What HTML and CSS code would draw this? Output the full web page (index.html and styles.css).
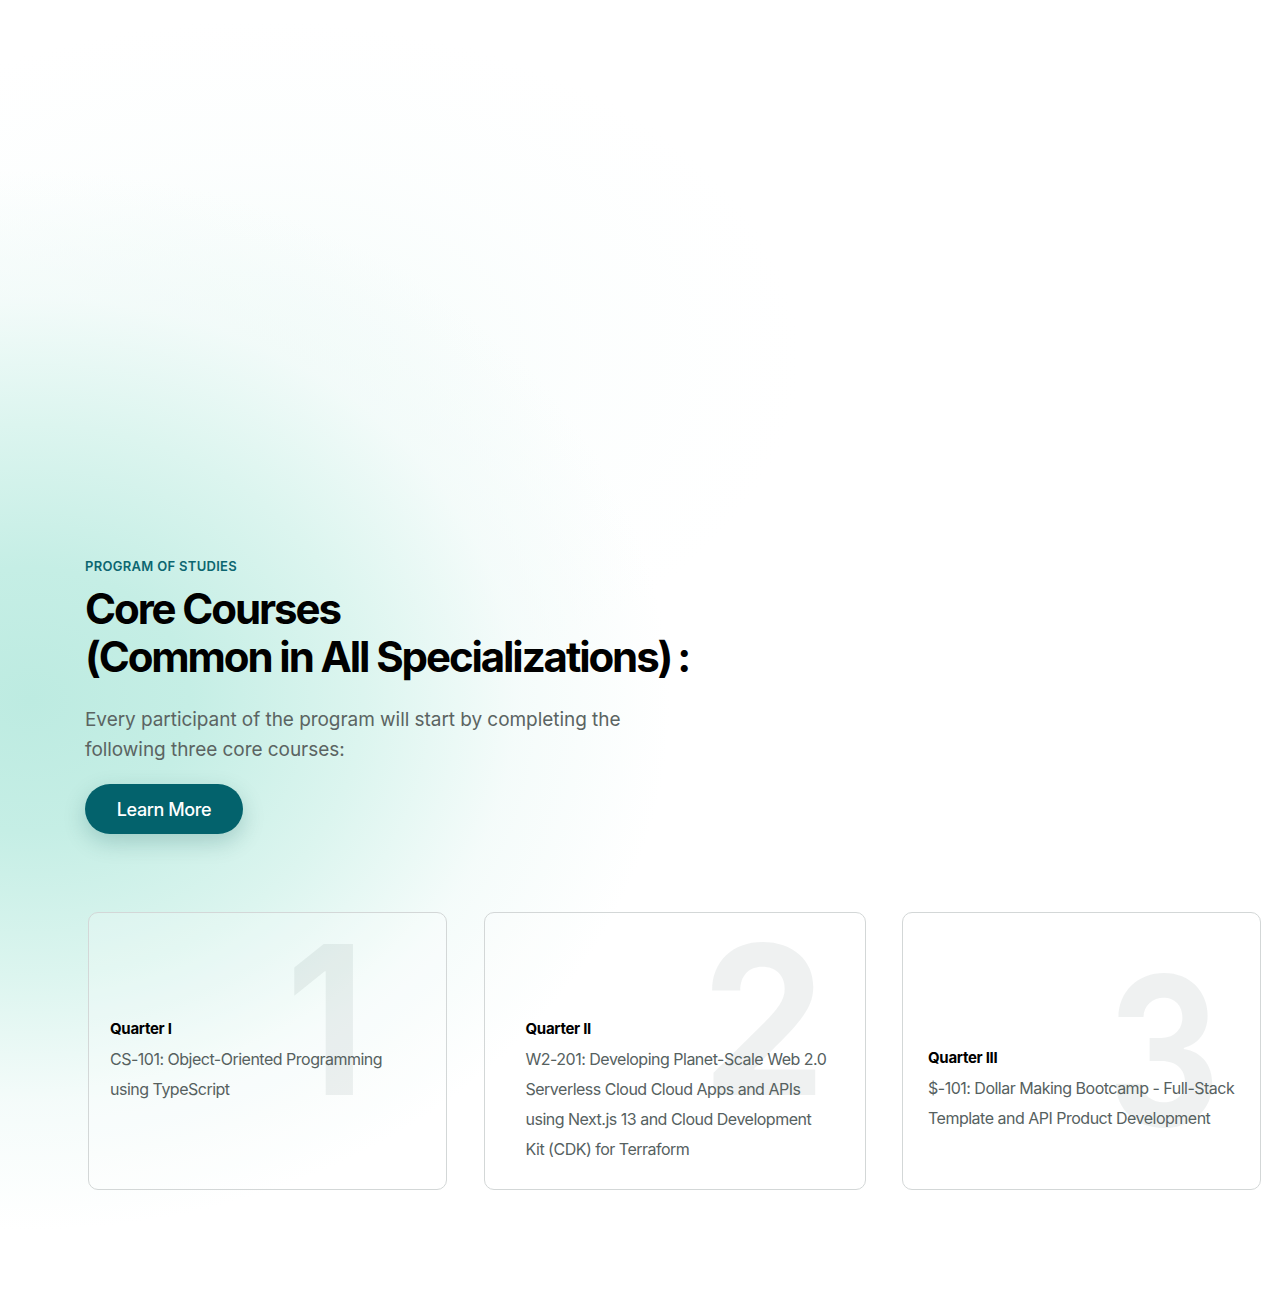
FILE: index.html
```html
<!DOCTYPE html>
<html lang="en">
<head>
<meta charset="utf-8">
<title>Core Courses</title>
<link rel="stylesheet" href="styles.css">
</head>
<body>
<main class="page">
  <section class="intro">
    <p class="eyebrow">PROGRAM OF STUDIES</p>
    <h1 class="title">Core Courses<br>(Common in All Specializations)<span class="colon">:</span></h1>
    <p class="lead">Every participant of the program will start by completing the following three core courses:</p>
    <a class="btn" href="#">Learn More</a>
  </section>
  <section class="cards">
    <article class="card card-1">
      <span class="num num-1" aria-hidden="true">1</span>
      <div class="card-body">
        <h3 class="card-title">Quarter I</h3>
        <p class="card-text">CS-101: Object-Oriented Programming using TypeScript</p>
      </div>
    </article>
    <article class="card card-2">
      <span class="num num-2" aria-hidden="true">2</span>
      <div class="card-body">
        <h3 class="card-title">Quarter II</h3>
        <p class="card-text">W2-201: Developing Planet-Scale Web 2.0 Serverless Cloud Cloud Apps and APIs using Next.js 13 and Cloud Development Kit (CDK) for Terraform</p>
      </div>
    </article>
    <article class="card card-3">
      <span class="num num-3" aria-hidden="true">3</span>
      <div class="card-body">
        <h3 class="card-title">Quarter III</h3>
        <p class="card-text">$-101: Dollar Making Bootcamp - Full-Stack Template and API Product Development</p>
      </div>
    </article>
  </section>
</main>
</body>
</html>
```

FILE: styles.css
```css
* { box-sizing: border-box; }

html, body {
  margin: 0;
  padding: 0;
}

body {
  font-family: "Inter", "Noto Sans", sans-serif;
  color: #000;
  background: #fff;
  overflow: hidden;
}

.page {
  width: 1262px;
  min-height: 1315px;
  background:
    radial-gradient(ellipse 640px 530px at 30px 700px, #bdebe1 0%, #c5eee5 25%, #dcf5ef 52%, rgba(240, 250, 248, 0.7) 76%, rgba(255, 255, 255, 0) 100%),
    radial-gradient(ellipse 540px 340px at 260px 360px, rgba(242, 251, 249, 0.8) 0%, rgba(248, 253, 252, 0.4) 60%, rgba(255, 255, 255, 0) 100%),
    #fff;
  padding-top: 557px;
}

.intro {
  padding-left: 85px;
}

.eyebrow {
  margin: 0;
  font-size: 13px;
  line-height: 18px;
  font-weight: 600;
  color: #0c6670;
  letter-spacing: 0.3px;
}

.title {
  margin: 10px 0 0;
  font-size: 42px;
  line-height: 48px;
  font-weight: 700;
  letter-spacing: -2.1px;
  color: #000;
}

.colon {
  margin-left: 6px;
}

.lead {
  margin: 24px 0 0;
  width: 580px;
  font-size: 19px;
  line-height: 30px;
  color: #5b6462;
  letter-spacing: -0.05px;
}

.btn {
  display: inline-flex;
  align-items: center;
  justify-content: center;
  margin-top: 19px;
  width: 158px;
  height: 50px;
  border-radius: 25px;
  background: #03626c;
  color: #fff;
  text-decoration: none;
  font-size: 18px;
  font-weight: 500;
  letter-spacing: -0.4px;
  box-shadow: 0 8px 22px rgba(10, 80, 80, 0.22);
}

.cards {
  display: grid;
  grid-template-columns: 359px 382px 359px;
  column-gap: 36.5px;
  margin-top: 78px;
  padding-left: 88px;
}

.card {
  position: relative;
  height: 278px;
  border: 1px solid #d3d7d7;
  border-radius: 10px;
  background: rgba(255, 255, 255, 0.22);
  padding: 106px 22px 0 21px;
}

.card-2 {
  padding-left: 41px;
  padding-right: 34px;
}

.card-3 {
  padding-top: 135px;
  padding-left: 25px;
  padding-right: 14px;
}

.num {
  position: absolute;
  top: 0;
  font-size: 208px;
  line-height: 208px;
  height: 208px;
  font-weight: 700;
  color: rgba(30, 50, 50, 0.07);
  z-index: 0;
  pointer-events: none;
}

.num-1 { left: 197px; top: 2px; transform: scaleX(0.88); transform-origin: left center; }
.num-2 { right: 38px; top: 2px; transform: scaleX(0.95); transform-origin: right center; }
.num-3 { right: 40px; top: 33px; transform: scaleX(0.84); transform-origin: right center; }

.card-body {
  position: relative;
  z-index: 1;
}

.card-title {
  margin: 0;
  font-size: 15px;
  line-height: 20px;
  font-weight: 700;
  letter-spacing: -0.3px;
  color: #000;
}

.card-text {
  margin: 5px 0 0;
  font-size: 16px;
  line-height: 30px;
  color: #56615f;
  letter-spacing: -0.5px;
}
```
